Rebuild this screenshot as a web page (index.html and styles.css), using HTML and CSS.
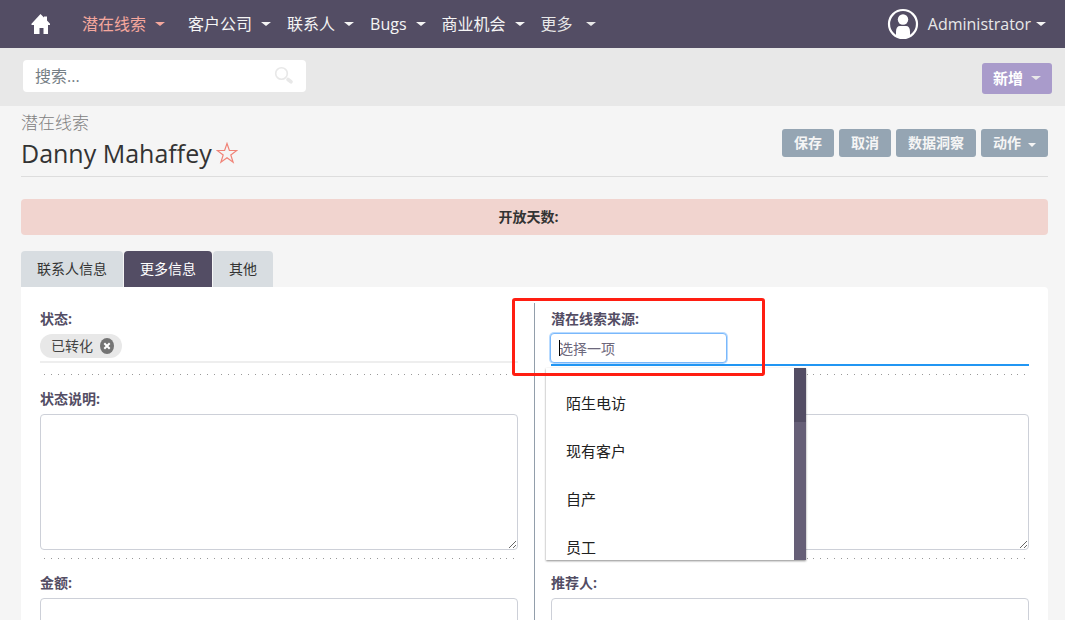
FILE: index.html
```html
<!DOCTYPE html>
<html lang="zh-CN">
<head>
<meta charset="utf-8">
<title>Danny Mahaffey - 潜在线索</title>
<link rel="stylesheet" href="styles.css">
</head>
<body>
<header class="navbar">
  <a class="home" href="#" aria-label="首页">
    <svg width="20" height="20" viewBox="0 0 20 20" aria-hidden="true"><path fill="#fff" d="M9.500 0 13 3.500V2.500h3v4L19 9.700V11h-2v9h-4.500v-6H8.500v6H3v-9H0.500V9.700z"/></svg>
  </a>
  <nav class="menu">
    <a class="menu-item active" href="#">潜在线索<span class="caret"></span></a>
    <a class="menu-item" href="#">客户公司<span class="caret"></span></a>
    <a class="menu-item" href="#">联系人<span class="caret"></span></a>
    <a class="menu-item" href="#">Bugs<span class="caret"></span></a>
    <a class="menu-item" href="#">商业机会<span class="caret"></span></a>
    <a class="menu-item more" href="#">更多<span class="caret"></span></a>
  </nav>
  <button class="user" type="button">
    <svg width="32" height="32" viewBox="0 0 32 32" aria-hidden="true"><circle cx="16" cy="16" r="14" fill="none" stroke="#fff" stroke-width="2.200"/><circle cx="16" cy="11.500" r="5.200" fill="#fff"/><path fill="#fff" d="M9 28v-4.500C9 20 10.500 18 13 18h6c2.500 0 4 2 4 5.500V28l-7 2.500z"/></svg>
    <span>Administrator</span><span class="caret"></span>
  </button>
</header>
<div class="toolbar">
  <form class="search" role="search">
    <input type="text" class="search-input" placeholder="搜索..." aria-label="搜索">
    <button class="search-button" type="button" aria-label="搜索">
      <svg width="20" height="20" viewBox="0 0 20 20" aria-hidden="true"><circle cx="7.500" cy="7.500" r="5.800" fill="none" stroke="#e8e8e8" stroke-width="1.600"/><path d="m14 13.500 3 2.300" stroke="#e8e8e8" stroke-width="3.600" stroke-linecap="round"/></svg>
    </button>
  </form>
  <button class="new-button" type="button">新增<span class="caret"></span></button>
</div>
<main class="page">
  <div class="record-header">
    <div>
      <div class="module">潜在线索</div>
      <h1 class="title">Danny Mahaffey<svg width="22" height="22" viewBox="0 0 22 22" aria-hidden="true"><path fill="none" stroke="#f08377" stroke-width="1.200" d="m11 1.500 2.400 7h7.400l-6 4.500 2.300 7.200-6.100-4.400-6.100 4.400 2.300-7.200-6-4.500h7.400z"/></svg></h1>
    </div>
    <div class="actions">
      <button class="action" type="button">保存</button>
      <button class="action" type="button">取消</button>
      <button class="action" type="button">数据洞察</button>
      <button class="action" type="button">动作<span class="caret small"></span></button>
    </div>
  </div>
  <div class="notice">开放天数:</div>
  <div class="tabs" role="tablist">
    <button class="tab" type="button" role="tab">联系人信息</button>
    <button class="tab selected" type="button" role="tab" aria-selected="true">更多信息</button>
    <button class="tab" type="button" role="tab">其他</button>
  </div>
  <section class="panel">
    <div class="column">
      <div class="field">
        <span class="label">状态:</span>
        <div class="control">
          <div class="chips"><span class="chip">已转化<button class="chip-remove" type="button" aria-label="移除"><svg width="14" height="16" viewBox="0 0 14 16" aria-hidden="true"><ellipse cx="7" cy="8" rx="7" ry="8" fill="#747474"/><path d="m4.300 5.300 5.400 5.400m0-5.400-5.400 5.400" stroke="#fff" stroke-width="2"/></svg></button></span></div>
        </div>
      </div>
      <div class="field">
        <label class="label" for="status-note">状态说明:</label>
        <textarea class="box area" id="status-note"></textarea>
      </div>
      <div class="field">
        <label class="label" for="amount">金额:</label>
        <input class="box" type="text" id="amount">
      </div>
    </div>
    <div class="divider"></div>
    <div class="column">
      <div class="field">
        <label class="label" for="source">潜在线索来源:</label>
        <div class="control source">
          <input class="picker" id="source" type="text" placeholder="选择一项">
          <span class="cursor"></span>
          <div class="dropdown">
            <div class="options" role="listbox" aria-label="潜在线索来源">
              <div class="option" role="option">陌生电访</div>
              <div class="option" role="option">现有客户</div>
              <div class="option" role="option">自产</div>
              <div class="option" role="option">员工</div>
            </div>
            <div class="track"><div class="thumb"></div></div>
          </div>
          <div class="highlight"></div>
        </div>
      </div>
      <div class="field">
        <label class="label" for="source-note"></label>
        <textarea class="box area" id="source-note"></textarea>
      </div>
      <div class="field">
        <label class="label" for="referrer">推荐人:</label>
        <input class="box" type="text" id="referrer">
      </div>
    </div>
  </section>
</main>
</body>
</html>
```
FILE: styles.css
```css
* { box-sizing: border-box; }
body {
  margin: 0;
  height: 100vh;
  overflow: hidden;
  background: #f5f5f5;
  color: #534d64;
  font: 14px/20px "Open Sans", "Noto Sans CJK SC", sans-serif;
}
button, input, textarea { font: inherit; color: inherit; margin: 0; }
button { border: 0; padding: 0; background: none; }
a { color: inherit; text-decoration: none; }
svg { display: block; flex: none; }

.caret {
  flex: none;
  border: 5px solid transparent;
  border-top-color: currentColor;
  border-top-width: 4px;
  border-bottom: 0;
}
.caret.small { border-left-width: 4px; border-right-width: 4px; margin-top: 4px; }

.navbar {
  display: flex;
  align-items: center;
  height: 48px;
  padding: 0 19px 0 31px;
  background: #534d64;
  color: #f5f5f5;
  font-size: 16px;
  line-height: 24px;
}
.menu { display: flex; gap: 16px; margin-left: 31px; }
.menu-item { display: flex; align-items: center; gap: 9px; }
.menu-item.active { color: #f5a79d; margin-right: 7px; }
.menu-item.more { gap: 13px; color: #e8e8e8; }
.user { display: flex; align-items: center; margin-left: auto; color: #e8e8e8; font-size: 16px; }
.user svg { margin-right: 9px; }
.user .caret { margin-left: 5px; color: #f5f5f5; }

.toolbar {
  display: flex;
  align-items: center;
  justify-content: space-between;
  height: 58px;
  padding: 0 13px 0 23px;
  background: #e8e8e8;
}
.search {
  display: flex;
  align-items: center;
  width: 283px;
  height: 32px;
  margin-bottom: 2px;
  padding: 0 12px;
  border-radius: 4px;
  background: #fff;
}
.search-input { flex: 1; min-width: 0; border: 0; padding: 0; outline: 0; background: none; font-size: 16px; }
.search-input::placeholder { color: #757e85; opacity: 1; }
.new-button {
  display: flex;
  align-items: center;
  gap: 8px;
  height: 31px;
  padding: 0 11px;
  border-radius: 3px;
  margin-top: 2px;
  background: #a99bcb;
  color: #fff;
  font-size: 15px;
  font-weight: 700;
}
.new-button .caret { color: #e8e8e8; }

.page { padding: 0 17px 0 21px; }
.record-header {
  display: flex;
  justify-content: space-between;
  align-items: center;
  height: 71px;
  border-bottom: 1px solid #ddd;
}
.module { color: #808080; font-size: 17px; line-height: 24px; font-weight: 300; }
.title {
  display: flex;
  align-items: center;
  gap: 4px;
  margin: 0;
  color: #333;
  font-size: 25px;
  line-height: 36px;
  font-weight: 400;
}
.actions { display: flex; gap: 5px; margin-top: 4px; }
.action {
  display: flex;
  align-items: center;
  gap: 7px;
  height: 28px;
  padding: 0 12px;
  border-radius: 3px;
  background: #95a5b3;
  color: #f5f5f5;
  font-size: 14px;
  font-weight: 700;
}

.notice {
  height: 36px;
  margin-top: 22px;
  padding-right: 12px;
  border-radius: 4px;
  background: #f1d4cf;
  color: #333;
  line-height: 36px;
  font-weight: 700;
  text-align: center;
}

.tabs { display: flex; gap: 1px; margin-top: 16px; }
.tab {
  height: 36px;
  padding: 0 16px;
  border-radius: 4px 4px 0 0;
  background: #d8dde1;
  color: #333;
}
.tab.selected { background: #534d64; color: #fff; }

.panel {
  display: grid;
  grid-template-columns: 1fr 1px 1fr;
  gap: 16px;
  padding: 16px 19px;
  border-radius: 0 4px 4px 4px;
  background: #fff;
}
.divider { background: #929eab; }
.column { padding-top: 6px; min-width: 0; }
.field { display: flex; flex-direction: column; gap: 5px; }
.field::after {
  content: "";
  height: 1px;
  margin: 3px 0 14px 4px;
  background: repeating-linear-gradient(90deg, #999 0 1px, transparent 1px 7px, #999 7px 8px, transparent 8px 14px, #999 14px 15px, transparent 15px 20px, #999 20px 21px, transparent 21px 27px, #999 27px 28px, transparent 28px 34px);
}
.label { min-height: 20px; font-weight: 700; }
.control { height: 32px; }
.box {
  width: 100%;
  height: 36px;
  padding: 6px 8px;
  border: 1px solid #cdd0d8;
  border-radius: 4px;
  background: #fff;
  outline: 0;
}
.area { display: block; height: 136px; resize: vertical; }

.chips { height: 29px; border-bottom: 2px solid #eee; }
.chip {
  display: inline-flex;
  align-items: center;
  gap: 7px;
  height: 24px;
  padding: 0 8px 0 11px;
  border-radius: 12px;
  background: #e8e8e8;
  color: #444;
}

.source { position: relative; border-bottom: 2px solid #2196f3; }
.picker {
  display: block;
  width: 177px;
  height: 30px;
  margin: -1px 0 0 -1px;
  padding: 0 8px;
  border: 1px solid #7ab8fb;
  border-radius: 4px;
  box-shadow: 0 0 0 1px #b9dbff;
  background: #fff;
  outline: 0;
}
.picker::placeholder { color: #6d687c; opacity: 1; }
.cursor { position: absolute; left: 8px; top: 6px; width: 1px; height: 16px; background: #000; }
.dropdown {
  position: absolute;
  z-index: 1;
  left: -5px;
  top: 34px;
  display: flex;
  width: 260px;
  height: 192px;
  background: #fff;
  box-shadow: 0 1px 2px rgba(0, 0, 0, 0.45);
}
.options { flex: 1; overflow: hidden; padding-top: 11px; }
.option { height: 48px; padding-left: 20px; color: #212121; font-size: 15px; line-height: 48px; }
.track { width: 12px; background: #665f77; }
.thumb { height: 54px; background: #534d64; }
.highlight {
  position: absolute;
  z-index: 2;
  left: -39px;
  top: -36px;
  width: 253px;
  height: 78px;
  border: 3px solid #ff1e12;
  border-radius: 3px;
  pointer-events: none;
}
```
